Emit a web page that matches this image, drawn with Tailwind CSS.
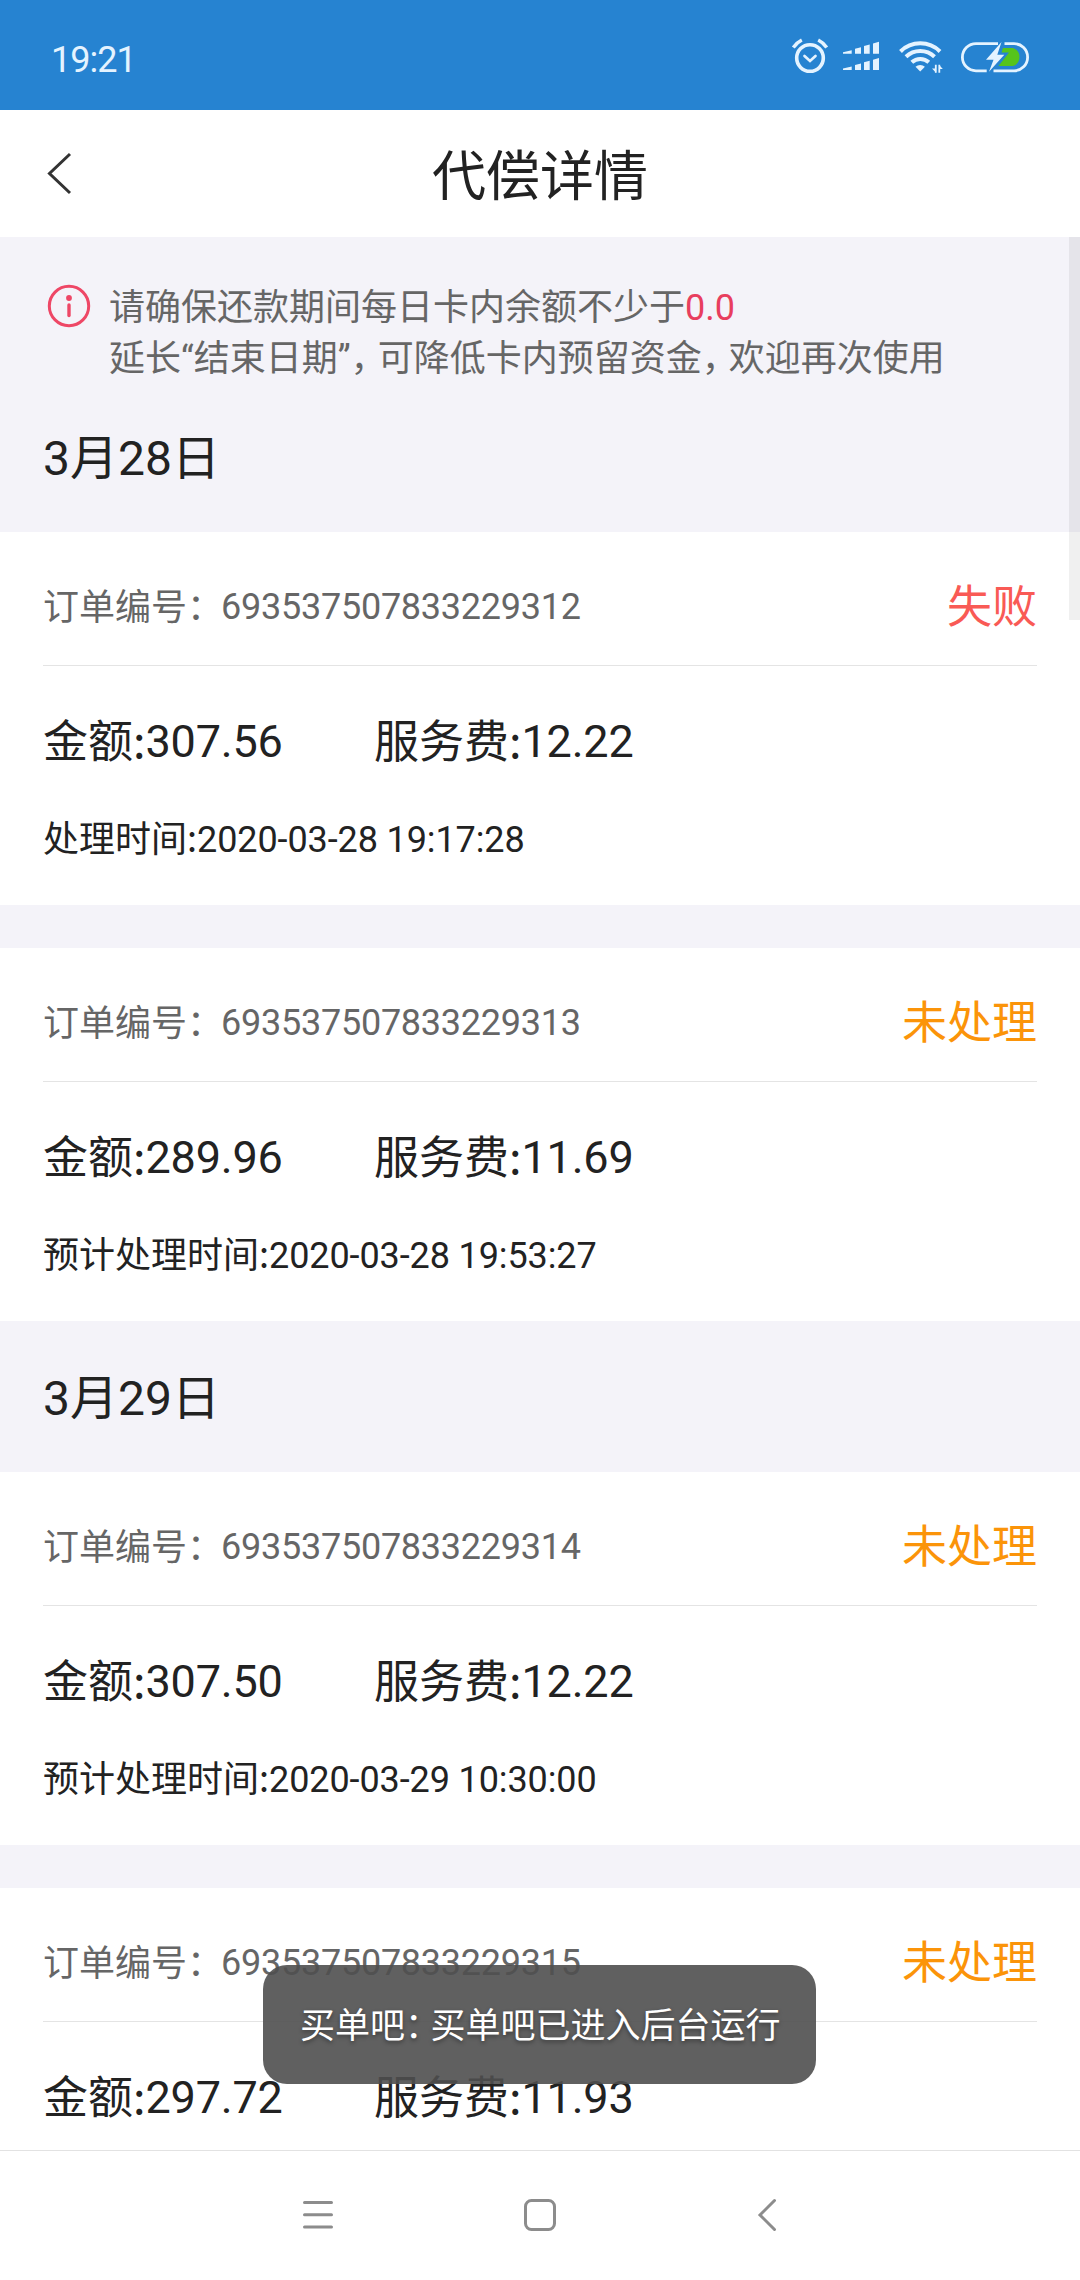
<!DOCTYPE html>
<html lang="zh-CN">
<head>
<meta charset="utf-8">
<title>代偿详情</title>
<script src="https://cdn.jsdelivr.net/npm/@tailwindcss/browser@4"></script>
</head>
<body class="bg-white">
<div class="relative flex h-[2280px] w-[1080px] flex-col overflow-hidden bg-white font-['Roboto','Noto_Sans_CJK_SC',sans-serif] text-[36px] text-[#222]">

  <!-- Status bar -->
  <header class="flex h-[110px] shrink-0 items-center justify-between bg-[#2683d1] pl-[51px] pr-[50px] pt-[10px] text-[#e4f3ff]">
    <span class="leading-[50px] tracking-[-1px]">19:21</span>
    <svg class="-mt-[2px] h-[80px] w-[240px]" viewBox="790 20 240 80" fill="none" stroke="#e4f3ff">
      <circle cx="810" cy="59" r="13.300" stroke-width="3.600"/>
      <path d="M804.500 57l5.500 5 5.500-5" stroke-width="2.700" stroke-linecap="round"/>
      <path d="M793.300 48.500q3.500-5 8.500-7.500M826.700 48.500q-3.500-5-8.500-7.500" stroke-width="3.500"/>
      <g fill="#e4f3ff" stroke="none">
        <path d="M843 53.200l8.700-2v3.500h-8.700zM855 49.700l6-1.500v6.500h-6zM864 46.900l5.700-1.500v9.300h-5.700zM873 44.400l6-1.600v11.900h-6z"/>
        <path d="M843 69.500l8.700-2v3.500h-8.700zM855 66l6-1.500v6.500h-6zM864 63.200l5.700-1.500v9.300h-5.700zM873 60.700l6-1.600v11.900h-6z"/>
      </g>
      <path d="M900.500 52.500a28 28 0 0 1 39.500 0M906 57.800a20.500 20.500 0 0 1 28.500 0M911.800 63.300a12.500 12.500 0 0 1 17 0" stroke-width="4"/>
      <path d="M920.200 72.500l-4.700-4.700a6.800 6.800 0 0 1 9.400 0z" fill="#e4f3ff" stroke="none"/>
      <path d="M935.800 65.700v8M939.300 65.700v8" stroke-width="1.800"/>
      <path d="M936 73.700l-4-4.300h4zM939 65.700v4.300h3.800z" fill="#e4f3ff" stroke="none"/>
      <path d="M998 44.600H976a13.600 13.600 0 0 0 0 27.200H986.700M1004.500 44.600H1014a13.600 13.600 0 0 1 0 27.200H993.500" stroke-width="2.800"/>
      <path d="M1003 49h10a9.500 9.500 0 0 1 0 18h-14.500l10.500-13.500h-7.500z" fill="#56c41c" stroke="none"/>
      <path d="M1001.500 43l-15.500 17.700h7.500l-4.500 12 15.300-17h-7z" fill="#e4f3ff" stroke="none"/>
    </svg>
  </header>

  <!-- Title bar -->
  <div class="grid h-[127px] shrink-0 grid-cols-[1fr_auto_1fr] items-center pt-[8px]">
    <svg class="-mt-[10px] ml-[44px] h-[44px] w-[30px]" viewBox="0 0 30 44" fill="none" stroke="#333" stroke-width="3"><path d="M26 3L5.500 22.500 26 42"/></svg>
    <h1 class="text-[54px] leading-[72px]">代偿详情</h1>
  </div>

  <main class="relative flex h-[1913px] shrink-0 flex-col overflow-hidden">
    <div class="flex h-[144px] shrink-0 bg-[#f4f3f9] pl-[46px] pt-[46px] text-[#666]">
      <svg class="-mt-px h-[46px] w-[46px]" viewBox="0 0 46 46"><circle cx="23" cy="24" r="19.700" fill="none" stroke="#ee4766" stroke-width="3"/><circle cx="23" cy="16" r="2.900" fill="#ee4766"/><path d="M23 23v10.500" stroke="#ee4766" stroke-width="3.400" stroke-linecap="round"/></svg>
      <div class="ml-[17px] whitespace-nowrap leading-[51px]">
        <p>请确保还款期间每日卡内余额不少于<span class="text-[#e83e5e]">0.0</span></p>
        <p>延长“结束日期”<span class="tracking-[-9px]">，</span>可降低卡内预留资金<span class="tracking-[-9px]">，</span>欢迎再次使用</p>
      </div>
    </div>

    <h2 class="flex h-[151px] shrink-0 items-center bg-[#f4f3f9] pl-[43px] pt-[5px] text-[48px] leading-[64px]">3月28日</h2>

    <section class="h-[373px] shrink-0 px-[43px]">
      <div class="flex h-[134px] items-center justify-between border-b border-[#e4e4e4] pt-[19px]">
        <p class="flex whitespace-nowrap leading-[50px] text-[#666]"><span>订单编号<span class="tracking-[-2px]">：</span></span><span class="-mt-px tracking-[-0.25px]">693537507833229312</span></p>
        <p class="text-[45px] leading-[60px] text-[#f95a55]">失败</p>
      </div>
      <div class="mt-[46px] grid grid-cols-[331px_1fr] text-[45px] leading-[60px] tracking-[-0.2px]"><p><span class="align-[-1px] font-['Noto_Sans_CJK_SC'] leading-none tracking-normal">金额:</span>307.56</p><p><span class="align-[-1px] font-['Noto_Sans_CJK_SC'] leading-none tracking-normal">服务费:</span>12.22</p></div>
      <p class="mt-[43px] leading-[50px] tracking-[-0.1px]"><span class="font-['Noto_Sans_CJK_SC'] leading-none tracking-normal">处理时间:</span>2020-03-28 19:17:28</p>
    </section>

    <div class="h-[43px] shrink-0 bg-[#f4f3f9]"></div>

    <section class="h-[373px] shrink-0 px-[43px]">
      <div class="flex h-[134px] items-center justify-between border-b border-[#e4e4e4] pt-[19px]">
        <p class="flex whitespace-nowrap leading-[50px] text-[#666]"><span>订单编号<span class="tracking-[-2px]">：</span></span><span class="-mt-px tracking-[-0.25px]">693537507833229313</span></p>
        <p class="text-[45px] leading-[60px] text-[#fb9409]">未处理</p>
      </div>
      <div class="mt-[46px] grid grid-cols-[331px_1fr] text-[45px] leading-[60px] tracking-[-0.2px]"><p><span class="align-[-1px] font-['Noto_Sans_CJK_SC'] leading-none tracking-normal">金额:</span>289.96</p><p><span class="align-[-1px] font-['Noto_Sans_CJK_SC'] leading-none tracking-normal">服务费:</span>11.69</p></div>
      <p class="mt-[43px] leading-[50px] tracking-[-0.1px]"><span class="font-['Noto_Sans_CJK_SC'] leading-none tracking-normal">预计处理时间:</span>2020-03-28 19:53:27</p>
    </section>

    <h2 class="flex h-[151px] shrink-0 items-center bg-[#f4f3f9] pl-[43px] pt-[5px] text-[48px] leading-[64px]">3月29日</h2>

    <section class="h-[373px] shrink-0 px-[43px]">
      <div class="flex h-[134px] items-center justify-between border-b border-[#e4e4e4] pt-[19px]">
        <p class="flex whitespace-nowrap leading-[50px] text-[#666]"><span>订单编号<span class="tracking-[-2px]">：</span></span><span class="-mt-px tracking-[-0.25px]">693537507833229314</span></p>
        <p class="text-[45px] leading-[60px] text-[#fb9409]">未处理</p>
      </div>
      <div class="mt-[46px] grid grid-cols-[331px_1fr] text-[45px] leading-[60px] tracking-[-0.2px]"><p><span class="align-[-1px] font-['Noto_Sans_CJK_SC'] leading-none tracking-normal">金额:</span>307.50</p><p><span class="align-[-1px] font-['Noto_Sans_CJK_SC'] leading-none tracking-normal">服务费:</span>12.22</p></div>
      <p class="mt-[43px] leading-[50px] tracking-[-0.1px]"><span class="font-['Noto_Sans_CJK_SC'] leading-none tracking-normal">预计处理时间:</span>2020-03-29 10:30:00</p>
    </section>

    <div class="h-[43px] shrink-0 bg-[#f4f3f9]"></div>

    <section class="shrink-0 px-[43px]">
      <div class="flex h-[134px] items-center justify-between border-b border-[#e4e4e4] pt-[19px]">
        <p class="flex whitespace-nowrap leading-[50px] text-[#666]"><span>订单编号<span class="tracking-[-2px]">：</span></span><span class="-mt-px tracking-[-0.25px]">693537507833229315</span></p>
        <p class="text-[45px] leading-[60px] text-[#fb9409]">未处理</p>
      </div>
      <div class="mt-[46px] grid grid-cols-[331px_1fr] text-[45px] leading-[60px] tracking-[-0.2px]"><p><span class="align-[-1px] font-['Noto_Sans_CJK_SC'] leading-none tracking-normal">金额:</span>297.72</p><p><span class="align-[-1px] font-['Noto_Sans_CJK_SC'] leading-none tracking-normal">服务费:</span>11.93</p></div>
    </section>

    <!-- Scroll indicator -->
    <div class="absolute right-0 top-0 h-[383px] w-[11px] bg-black/6"></div>
  </main>

  <!-- Navigation bar -->
  <nav class="flex h-[130px] shrink-0 justify-center border-t border-[#e2e2e2] pt-[46px] text-[#8c8c8c]">
    <svg class="h-[36px] w-[500px]" viewBox="290 2197 500 36" fill="none" stroke="currentColor" stroke-width="3">
      <path d="M304.500 2202.500h27M304.500 2214.700h27M304.500 2226.900h27" stroke-linecap="round"/>
      <rect x="525.500" y="2200.500" width="29" height="29" rx="6"/>
      <path d="M774.500 2200.500l-14.500 14.500 14.500 14.500" stroke-linecap="round"/>
    </svg>
  </nav>

  <!-- Toast -->
  <div class="absolute left-[263px] top-[1965px] h-[119px] w-[553px] whitespace-nowrap rounded-[24px] bg-[#4f4f4f]/90 pl-[37px] pt-[37px] text-[35px] leading-[50px] text-white text-shadow-[0_2px_4px_rgb(0_0_0/0.4)]">买单吧<span class="tracking-[-9.5px]">：</span>买单吧已进入后台运行</div>
</div>
</body>
</html>
